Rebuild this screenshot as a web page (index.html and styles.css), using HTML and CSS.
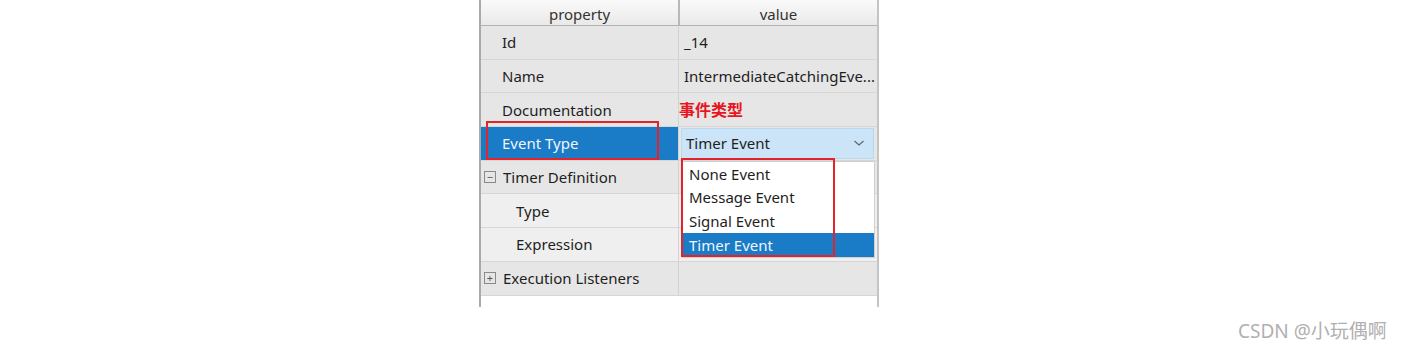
FILE: index.html
```html
<!DOCTYPE html>
<html lang="zh">
<head>
  <meta charset="UTF-8">
  <title>property</title>
  <link rel="stylesheet" href="styles.css">
</head>
<body>
  <div class="sheet">
    <div class="row head">
      <div class="cell">property</div>
      <div class="cell">value</div>
    </div>
    <div class="row">
      <div class="cell key">Id</div>
      <div class="cell val">_14</div>
    </div>
    <div class="row">
      <div class="cell key">Name</div>
      <div class="cell val">IntermediateCatchingEve...</div>
    </div>
    <div class="row">
      <div class="cell key">Documentation</div>
      <div class="cell val"><span class="note">事件类型</span></div>
    </div>
    <div class="row">
      <div class="cell key selected">Event Type</div>
      <div class="cell val">
        <div class="combo">
          <span>Timer Event</span>
          <svg width="12" height="8" viewBox="0 0 12 8"><path d="M1.5 2 L6 6 L10.5 2" fill="none" stroke="#606060" stroke-width="1.1"/></svg>
        </div>
      </div>
      <div class="mark mark-key"></div>
    </div>
    <div class="row">
      <div class="cell key group"><span class="box">−</span>Timer Definition</div>
      <div class="cell val"></div>
      <ul class="list">
        <li>None Event</li>
        <li>Message Event</li>
        <li>Signal Event</li>
        <li class="on">Timer Event</li>
      </ul>
      <div class="mark mark-list"></div>
    </div>
    <div class="row child">
      <div class="cell key sub">Type</div>
      <div class="cell val"></div>
    </div>
    <div class="row child">
      <div class="cell key sub">Expression</div>
      <div class="cell val"></div>
    </div>
    <div class="row">
      <div class="cell key group"><span class="box">+</span>Execution Listeners</div>
      <div class="cell val"></div>
    </div>
    <div class="tail"></div>
  </div>
  <div class="credit">CSDN @小玩偶啊</div>
</body>
</html>
```

FILE: styles.css
```css
body { margin: 0; background: #fff; font-family: "Noto Sans", "Noto Sans CJK SC", sans-serif; font-size: 15px; color: #1e1e1e; }
.sheet { margin-left: 479px; width: 396px; border-left: 2px solid #a9a9a9; border-right: 2px solid #c4c4c4; }
.row { position: relative; display: grid; grid-template-columns: 197px 1fr; height: 33.7px; background: #e6e6e6; border-bottom: 1px solid #d6d6d6; box-sizing: border-box; }
.row.child { background: #efefef; }
.cell { display: flex; align-items: center; padding-left: 21px; white-space: nowrap; overflow: hidden; }
.cell.val { border-left: 1px solid #d2d2d2; padding-left: 5px; }
.head { height: 26px; background: linear-gradient(#fafafa, #e9e9e9); border-bottom: 1px solid #b4b4b4; }
.head .cell { justify-content: center; padding: 3px 0 0; color: #333; }
.head .cell + .cell { border-left: 2px solid #b8b8b8; }
.key.selected { background: #1a7bc7; color: #f0f6fc; }
.key.group { padding-left: 3px; }
.key.sub { padding-left: 35px; }
.box { width: 10px; height: 10px; border: 1px solid #8a8a8a; margin-right: 7px; font-size: 11px; line-height: 9px; text-align: center; color: #555; }
.note { color: #e8161f; font-weight: bold; font-size: 16px; margin-left: -5px; margin-top: -2px; }
.combo { display: flex; align-items: center; justify-content: space-between; width: 193px; height: 31px; margin-left: -3px; padding: 0 8px 0 4px; box-sizing: border-box; background: #cce4f7; border: 1px solid #b9d7ee; }
.list { position: absolute; top: 0; left: 201px; width: 193px; margin: 0; padding: 0; list-style: none; background: #fff; border: 1px solid #cfcfcf; box-sizing: border-box; z-index: 2; }
.list li { height: 23.7px; line-height: 24px; padding-left: 6px; }
.list li.on { background: #1a7bc7; color: #f0f6fc; }
.mark { position: absolute; border: 2px solid #e3232c; z-index: 3; }
.mark-key { left: 5px; top: -6px; width: 169px; height: 35px; }
.mark-list { left: 200px; top: -3px; width: 150px; height: 95px; }
.tail { height: 11px; background: #fff; }
.credit { position: absolute; left: 1238px; top: 316px; font-size: 19px; color: #b0b0b0; }
```
